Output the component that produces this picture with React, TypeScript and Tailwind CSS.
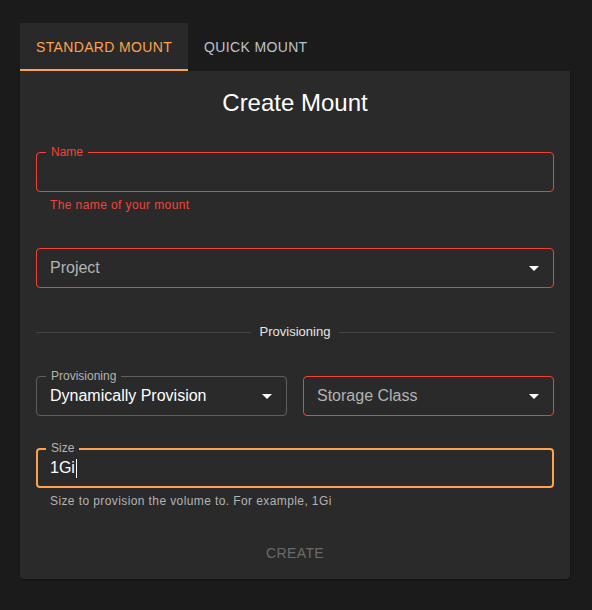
import { useState } from 'react';

type FieldTone = 'error' | 'focus' | 'idle';

const borderByTone: Record<FieldTone, string> = {
  error: 'border border-[#f44336]',
  focus: 'border-2 border-[#ffa24d]',
  idle: 'border border-[#5e5e5e]',
};

const labelByTone: Record<FieldTone, string> = {
  error: 'text-[#f44336]',
  focus: 'text-[#b3b3b3]',
  idle: 'text-[#b3b3b3]',
};

function DropArrow() {
  return (
    <svg viewBox="0 0 24 24" className="absolute right-[7px] top-1/2 h-6 w-6 -translate-y-1/2 fill-white">
      <path d="M7 10l5 5 5-5z" />
    </svg>
  );
}

type OutlinedProps = {
  tone: FieldTone;
  label?: string;
  placeholder?: string;
  value?: string;
  select?: boolean;
  caret?: boolean;
  className?: string;
};

function Outlined({ tone, label, placeholder, value, select, caret, className }: OutlinedProps) {
  return (
    <div className={`relative h-10 rounded ${borderByTone[tone]} ${className ?? ''}`}>
      {label && (
        <span
          className={`absolute bg-[#2a2a2a] px-[5px] text-[12px] leading-[16px] ${labelByTone[tone]} ${
            tone === 'focus' ? 'left-[8px] top-[-10px]' : 'left-[9px] top-[-9px]'
          }`}
        >
          {label}
        </span>
      )}
      <div className={`flex h-full items-center text-[16px] ${tone === 'focus' ? 'pl-[12px]' : 'pl-[13px]'}`}>
        {value ? (
          <span className="text-white">{value}</span>
        ) : (
          <span className="text-[#b3b3b3]">{placeholder}</span>
        )}
        {caret && <span className="ml-px h-[19px] w-px bg-white" />}
      </div>
      {select && <DropArrow />}
    </div>
  );
}

export default function App() {
  const [tab, setTab] = useState(0);
  const tabs = ['Standard Mount', 'Quick Mount'];

  return (
    <div className="min-h-[610px] bg-[#1b1b1b] px-5 pt-[23px] font-['Liberation_Sans',Arial,sans-serif]">
      <div className="flex h-12">
        {tabs.map((t, i) => (
          <button
            key={t}
            type="button"
            onClick={() => setTab(i)}
            className={`relative h-12 px-4 text-[14px] uppercase tracking-[0.35px] ${
              tab === i ? 'bg-[#292929] text-[#ffa24d]' : 'text-[#bcc3ca]'
            }`}
          >
            {t}
            {tab === i && <span className="absolute bottom-0 left-0 h-[2px] w-full bg-[#ffa24d]" />}
          </button>
        ))}
      </div>

      <div className="w-[550px] rounded-b bg-[#2a2a2a] px-4 pb-2 pt-4 shadow-[0_2px_1px_-1px_rgba(0,0,0,0.2),0_1px_1px_0_rgba(0,0,0,0.14),0_1px_3px_0_rgba(0,0,0,0.12)]">
        <h1 className="h-8 text-center text-[24px] leading-8 text-white">Create Mount</h1>

        <Outlined tone="error" label="Name" className="mt-[33px]" />
        <p className="ml-[14px] mt-[3px] h-5 text-[12px] leading-5 tracking-[0.4px] text-[#f44336]">
          The name of your mount
        </p>

        <Outlined tone="error" placeholder="Project" select className="mt-[33px]" />

        <div className="mt-[34px] flex h-5 items-center">
          <div className="h-px flex-1 bg-[#444]" />
          <span className="px-[9px] text-[13px] text-[#e6e6e6]">Provisioning</span>
          <div className="h-px flex-1 bg-[#444]" />
        </div>

        <div className="mt-[34px] grid grid-cols-2 gap-4">
          <Outlined tone="idle" label="Provisioning" value="Dynamically Provision" select />
          <Outlined tone="error" placeholder="Storage Class" select />
        </div>

        <Outlined tone="focus" label="Size" value="1Gi" caret className="mt-8" />
        <p className="ml-[14px] mt-[3px] h-5 text-[12px] leading-5 tracking-[0.4px] text-[#b3b3b3]">
          Size to provision the volume to. For example, 1Gi
        </p>

        <div className="mt-6 flex justify-center">
          <button
            type="button"
            disabled
            className="h-9 px-2 text-[14px] uppercase tracking-[0.4px] text-[#6a6a6a]"
          >
            Create
          </button>
        </div>
      </div>
    </div>
  );
}
